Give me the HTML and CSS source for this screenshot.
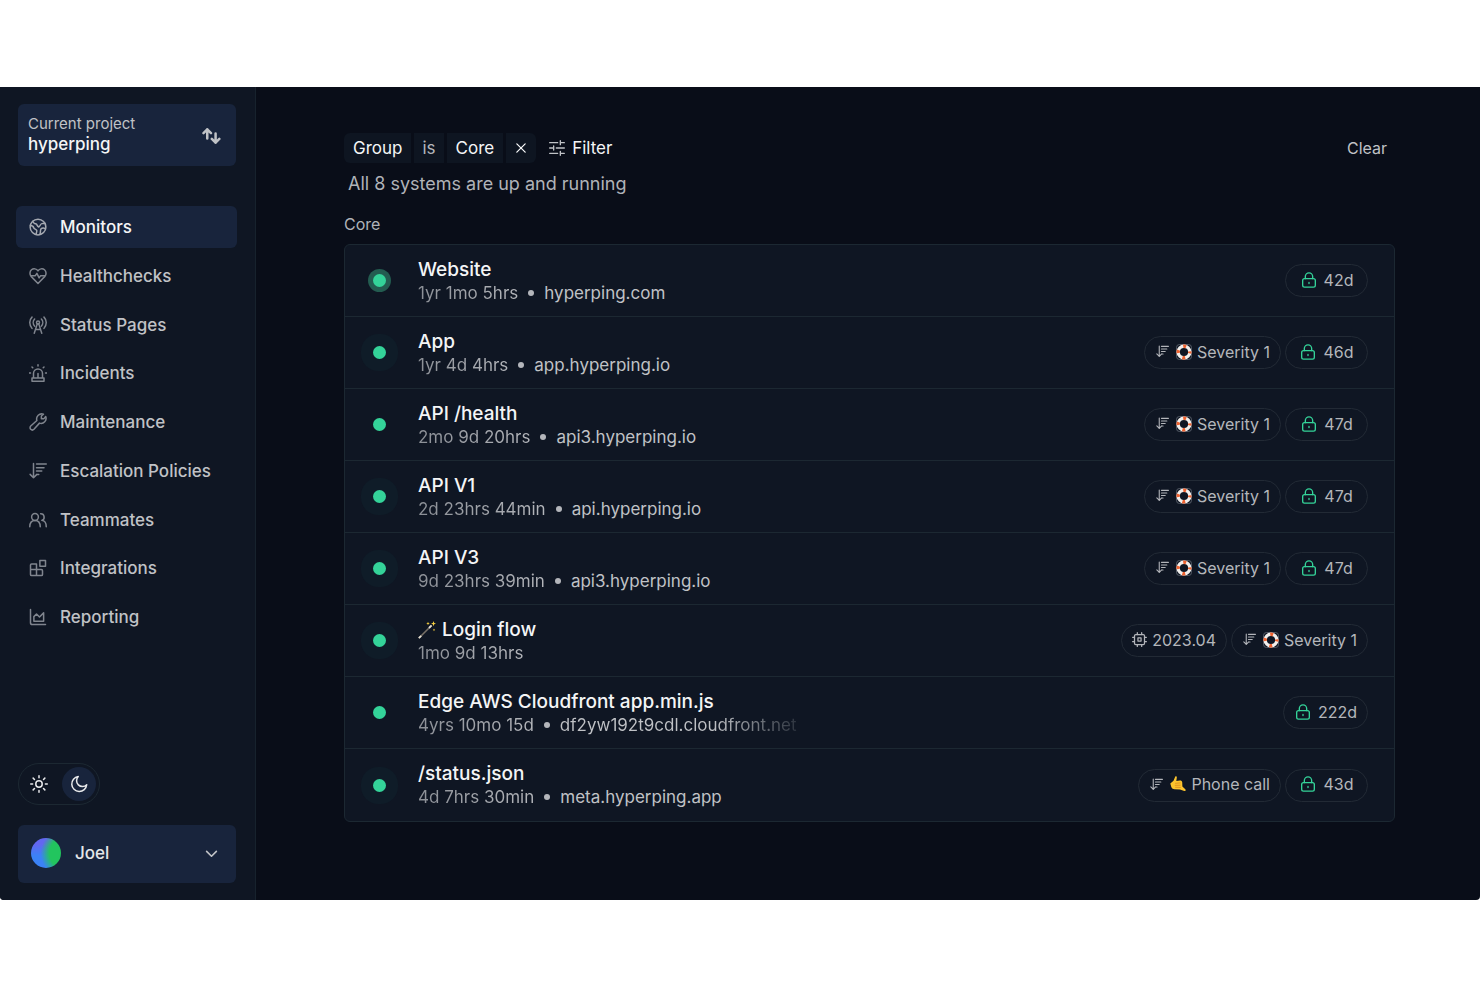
FILE: index.html
```
<!DOCTYPE html>
<html lang="en">
<head>
    <meta charset="UTF-8">
    <meta name="viewport" content="width=device-width, initial-scale=1.0">
    <title>Monitors - hyperping</title>
    <link rel="stylesheet" href="styles.css">
</head>
<body>

<!-- icon sprite -->
<svg class="sprite" aria-hidden="true">
    <symbol id="i-swap" viewBox="0 0 24 24"><path d="M7.500 15V4M3 8.500 7.500 4 12 8.500M17.500 9v11M13 15.500l4.500 4.500 4.500-4.500"/></symbol>
    <symbol id="i-globe" viewBox="0 0 24 24"><circle cx="12" cy="12" r="10.500"/><path d="M5 4.500c1 3 3 3.500 5 3.500 1 2 1 3 3 4 2-1 2-4 4-4.500 1-.5 3 0 4.500-.5M1.800 10c3 0 4 1 4.500 3s3 1.500 4 3.500c.6 1.500-.8 3.500-.8 5.500M22 14.500c-2-1.500-4.500-1.500-6 0-1.500 2 0 4-1.500 7.500"/></symbol>
    <symbol id="i-heart" viewBox="0 0 24 24"><path d="M12 22 2.800 12.500C.6 10 .8 5.800 3.300 3.700 6 1.500 10 2.200 12 5.200c2-3 6-3.700 8.700-1.500 2.500 2.100 2.700 6.300.5 8.800z"/><path d="M3 11.500h5.500l2-3 3 6 2-3H21"/></symbol>
    <symbol id="i-tower" viewBox="0 0 24 24"><circle cx="12" cy="8.500" r="2"/><path d="m7 23 4-12.500h2L17 23M9 18h6M4 1.500c-4 4-4 10.500 0 15M20 1.500c4 4 4 10.500 0 15M7.500 4c-2.500 2.500-2.500 6.500 0 9.500M16.500 4c2.500 2.500 2.500 6.500 0 9.500"/></symbol>
    <symbol id="i-siren" viewBox="0 0 24 24"><path d="M6 18.500v-6a6 6 0 0 1 12 0v6M4 18.500h16V23H4zM12 12.500v6M12 1v1.500M4 4l1 1M20 4l-1 1M.5 12H2M22 12h1.500"/></symbol>
    <symbol id="i-wrench" viewBox="0 0 24 24"><path d="M16.500 7.500V4l2.800-2.300A6.700 6.700 0 0 0 10.500 10L2.300 17.400a3 3 0 0 0 4.300 4.300l7.400-8.200A6.700 6.700 0 0 0 22.300 4.700L20 7.500z"/></symbol>
    <symbol id="i-sort" viewBox="0 0 24 24"><path d="M6 2v19M1.500 16.500 6 21l4.500-4.500M10 2.500h13M10 7.500h10M10 12h7M10 16.500h3"/></symbol>
    <symbol id="i-users" viewBox="0 0 24 24"><circle cx="8" cy="8" r="4.500"/><path d="M1 21c0-5 2.500-8.500 7-8.500s7 3.500 7 8.500M15.500 3.700a4.500 4.500 0 0 1 1.500 8.800c3.500.3 6 3.500 6 8.500"/></symbol>
    <symbol id="i-blocks" viewBox="0 0 24 24"><path d="M14.500 2H22v7.500h-7.500zM3.500 6.500H10V22H3.500A1.500 1.500 0 0 1 2 20.500V8a1.500 1.500 0 0 1 1.500-1.500zM2 14h14.500a1.500 1.500 0 0 1 1.500 1.500v5a1.500 1.500 0 0 1-1.500 1.500H10"/></symbol>
    <symbol id="i-chart" viewBox="0 0 24 24"><path d="M2 2v17.500A2.500 2.500 0 0 0 4.500 22H22M6.500 17.500v-6L10 8l4 4 5.500-5.500v11z"/></symbol>
    <symbol id="i-sun" viewBox="0 0 24 24"><circle cx="12" cy="12" r="4.300"/><path d="M12 1v2.500M12 20.500V23M1 12h2.500M20.500 12H23M4.200 4.200 6 6M18 18l1.800 1.800M4.200 19.800 6 18M18 6l1.800-1.800"/></symbol>
    <symbol id="i-moon" viewBox="0 0 24 24"><path d="M11 2A10 10 0 1 0 22.300 13 7.500 7.500 0 0 1 11 2z"/></symbol>
    <symbol id="i-chevron" viewBox="0 0 24 24"><path d="m3 8 9 9 9-9"/></symbol>
    <symbol id="i-close" viewBox="0 0 24 24"><path d="m2 2 20 20M22 2 2 22"/></symbol>
    <symbol id="i-filter" viewBox="0 0 24 24"><path d="M1 4h12M17 4h6M17 1v6M1 12h6M11 12h12M7 9v6M1 20h12M17 20h6M17 17v6"/></symbol>
    <symbol id="i-lock" viewBox="0 0 24 24"><rect x="2.500" y="10" width="19" height="12.800" rx="2.800"/><path d="M6.500 10V6.700a5.500 5.500 0 0 1 11 0V10M12 15.500v1.800"/></symbol>
    <symbol id="i-chip" viewBox="0 0 24 24"><rect x="4" y="4" width="16" height="16" rx="2"/><path d="M9.500 9.500h5v5h-5zM8.500 1v3M15.500 1v3M8.500 20v3M15.500 20v3M1 8.500h3M1 15.500h3M20 8.500h3M20 15.500h3"/></symbol>
    <symbol id="e-buoy" viewBox="0 0 16 16">
        <rect x=".5" y=".5" width="15" height="15" rx="3" fill="none" stroke="#626a75" stroke-width=".8"/>
        <circle cx="8" cy="8" r="5.800" fill="none" stroke="#f1efed" stroke-width="3.400"/>
        <circle cx="8" cy="8" r="5.800" fill="none" stroke="#ee6230" stroke-width="3.400" stroke-dasharray="3 6.110" stroke-dashoffset="1.500"/>
    </symbol>
    <symbol id="e-hand" viewBox="0 0 16 16">
        <path d="M5.300.5c.9-.5 1.700.2 1.500 1.200L6.300 5l3.500-.4c1.400-.1 2.200.5 2.400 1.600l.2 4.300 2.900 2.700c.9.900.1 2.200-1 1.800l-4.300-1.600-5.500-.2c-1.300-.1-2.600-.9-3.200-2.300L.3 7.400 3.500 4.800z" fill="#fcc42e"/>
        <path d="m5.500 7.300 4.700-.4M5.200 9.300l5-.1M5.600 11.300l4.800.1" fill="none" stroke="#d9861b" stroke-width=".8" stroke-linecap="round"/>
    </symbol>
    <symbol id="e-wand" viewBox="0 0 18 18">
        <path d="M1 17 13 5" stroke="#777067" stroke-width="1.600"/>
        <path d="m.8 17.200 2.400-2.400M11 7l2.600-2.600" stroke="#e5dfd1" stroke-width="1.800"/>
        <path d="m15.500 0 .7 2 1.800.6-1.800.7-.7 2-.7-2-1.800-.7 1.800-.6zM10 .8l.5 1.200 1.200.5-1.200.5L10 4.200 9.500 3l-1.200-.5L9.500 2zM16 7.500l.4 1 .9.400-.9.400-.4 1-.4-1-.9-.4.900-.4z" fill="#f6cf3f"/>
    </symbol>
</svg>

<div class="app">
    <aside class="sidebar">
        <button class="project" type="button">
            <span class="project-text">
                <span class="project-label">Current project</span>
                <span class="project-name">hyperping</span>
            </span>
            <svg class="icon swap"><use href="#i-swap"/></svg>
        </button>

        <nav class="nav">
            <a class="nav-item active" href="#"><svg class="icon"><use href="#i-globe"/></svg>Monitors</a>
            <a class="nav-item" href="#"><svg class="icon"><use href="#i-heart"/></svg>Healthchecks</a>
            <a class="nav-item" href="#"><svg class="icon"><use href="#i-tower"/></svg>Status Pages</a>
            <a class="nav-item" href="#"><svg class="icon"><use href="#i-siren"/></svg>Incidents</a>
            <a class="nav-item" href="#"><svg class="icon"><use href="#i-wrench"/></svg>Maintenance</a>
            <a class="nav-item" href="#"><svg class="icon"><use href="#i-sort"/></svg>Escalation Policies</a>
            <a class="nav-item" href="#"><svg class="icon"><use href="#i-users"/></svg>Teammates</a>
            <a class="nav-item" href="#"><svg class="icon"><use href="#i-blocks"/></svg>Integrations</a>
            <a class="nav-item" href="#"><svg class="icon"><use href="#i-chart"/></svg>Reporting</a>
        </nav>

        <div class="theme">
            <button class="theme-btn" type="button" aria-label="Light theme"><svg class="icon"><use href="#i-sun"/></svg></button>
            <button class="theme-btn on" type="button" aria-label="Dark theme"><svg class="icon"><use href="#i-moon"/></svg></button>
        </div>

        <button class="user" type="button">
            <span class="avatar"></span>
            <span class="user-name">Joel</span>
            <svg class="icon small"><use href="#i-chevron"/></svg>
        </button>
    </aside>

    <main class="content">
        <div class="filters">
            <div class="chips">
                <button class="chip" type="button">Group</button>
                <button class="chip dim" type="button">is</button>
                <button class="chip" type="button">Core</button>
                <button class="chip close" type="button" aria-label="Remove filter"><svg class="icon"><use href="#i-close"/></svg></button>
            </div>
            <button class="filter-btn" type="button"><svg class="icon"><use href="#i-filter"/></svg>Filter</button>
            <button class="clear-btn" type="button">Clear</button>
        </div>
        <p class="summary">All 8 systems are up and running</p>

        <h2 class="group-title">Core</h2>
        <ul class="monitors">
            <li class="monitor">
                <span class="dot ring"></span>
                <div class="info">
                    <div class="name">Website</div>
                    <div class="meta"><span class="time">1yr 1mo 5hrs</span><span class="sep"></span><span class="host">hyperping.com</span></div>
                </div>
                <div class="badges">
                    <span class="badge ssl"><svg class="icon lock"><use href="#i-lock"/></svg>42d</span>
                </div>
            </li>
            <li class="monitor">
                <span class="dot halo"></span>
                <div class="info">
                    <div class="name">App</div>
                    <div class="meta"><span class="time">1yr 4d 4hrs</span><span class="sep"></span><span class="host">app.hyperping.io</span></div>
                </div>
                <div class="badges">
                    <span class="badge"><svg class="icon"><use href="#i-sort"/></svg><svg class="emoji"><use href="#e-buoy"/></svg>Severity 1</span>
                    <span class="badge ssl"><svg class="icon lock"><use href="#i-lock"/></svg>46d</span>
                </div>
            </li>
            <li class="monitor">
                <span class="dot"></span>
                <div class="info">
                    <div class="name">API /health</div>
                    <div class="meta"><span class="time">2mo 9d 20hrs</span><span class="sep"></span><span class="host">api3.hyperping.io</span></div>
                </div>
                <div class="badges">
                    <span class="badge"><svg class="icon"><use href="#i-sort"/></svg><svg class="emoji"><use href="#e-buoy"/></svg>Severity 1</span>
                    <span class="badge ssl"><svg class="icon lock"><use href="#i-lock"/></svg>47d</span>
                </div>
            </li>
            <li class="monitor">
                <span class="dot halo"></span>
                <div class="info">
                    <div class="name">API V1</div>
                    <div class="meta"><span class="time">2d 23hrs 44min</span><span class="sep"></span><span class="host">api.hyperping.io</span></div>
                </div>
                <div class="badges">
                    <span class="badge"><svg class="icon"><use href="#i-sort"/></svg><svg class="emoji"><use href="#e-buoy"/></svg>Severity 1</span>
                    <span class="badge ssl"><svg class="icon lock"><use href="#i-lock"/></svg>47d</span>
                </div>
            </li>
            <li class="monitor">
                <span class="dot halo"></span>
                <div class="info">
                    <div class="name">API V3</div>
                    <div class="meta"><span class="time">9d 23hrs 39min</span><span class="sep"></span><span class="host">api3.hyperping.io</span></div>
                </div>
                <div class="badges">
                    <span class="badge"><svg class="icon"><use href="#i-sort"/></svg><svg class="emoji"><use href="#e-buoy"/></svg>Severity 1</span>
                    <span class="badge ssl"><svg class="icon lock"><use href="#i-lock"/></svg>47d</span>
                </div>
            </li>
            <li class="monitor">
                <span class="dot halo"></span>
                <div class="info">
                    <div class="name"><svg class="emoji wand"><use href="#e-wand"/></svg>Login flow</div>
                    <div class="meta"><span class="time">1mo 9d 13hrs</span></div>
                </div>
                <div class="badges">
                    <span class="badge"><svg class="icon chip-icon"><use href="#i-chip"/></svg>2023.04</span>
                    <span class="badge"><svg class="icon"><use href="#i-sort"/></svg><svg class="emoji"><use href="#e-buoy"/></svg>Severity 1</span>
                </div>
            </li>
            <li class="monitor">
                <span class="dot"></span>
                <div class="info">
                    <div class="name">Edge AWS Cloudfront app.min.js</div>
                    <div class="meta"><span class="time">4yrs 10mo 15d</span><span class="sep"></span><span class="host fade">df2yw192t9cdl.cloudfront.net</span></div>
                </div>
                <div class="badges">
                    <span class="badge ssl"><svg class="icon lock"><use href="#i-lock"/></svg>222d</span>
                </div>
            </li>
            <li class="monitor">
                <span class="dot halo"></span>
                <div class="info">
                    <div class="name">/status.json</div>
                    <div class="meta"><span class="time">4d 7hrs 30min</span><span class="sep"></span><span class="host">meta.hyperping.app</span></div>
                </div>
                <div class="badges">
                    <span class="badge"><svg class="icon"><use href="#i-sort"/></svg><svg class="emoji"><use href="#e-hand"/></svg>Phone call</span>
                    <span class="badge ssl"><svg class="icon lock"><use href="#i-lock"/></svg>43d</span>
                </div>
            </li>
        </ul>
    </main>
</div>

</body>
</html>
```
FILE: styles.css
```
* {
    box-sizing: border-box;
}
body {
    margin: 0;
    padding: 87px 0;
    min-height: 100vh;
    display: flex;
    background-color: #fff;
    font-family: Inter, "Liberation Sans", sans-serif;
    color: #c0c2c6;
}
button {
    font: inherit;
    color: inherit;
    background: none;
    border: 0;
    padding: 0;
    cursor: pointer;
}
a {
    color: inherit;
    text-decoration: none;
}
.sprite {
    position: absolute;
    width: 0;
    height: 0;
}
.icon {
    flex: none;
    width: 18px;
    height: 18px;
    fill: none;
    stroke: currentColor;
    stroke-width: 2;
    stroke-linecap: round;
    stroke-linejoin: round;
}
.emoji {
    flex: none;
    width: 16px;
    height: 16px;
}

.app {
    flex: 1;
    display: flex;
    background-color: #090d18;
    border-radius: 0 0 4px 4px;
    overflow: hidden;
}

/* sidebar */
.sidebar {
    flex: none;
    width: 256px;
    display: flex;
    flex-direction: column;
    padding: 17px 19px 17px 18px;
    background-color: #0f1623;
    border-right: 1px solid #17222d;
}
.project {
    display: flex;
    align-items: center;
    justify-content: space-between;
    height: 62px;
    padding: 0 15px 2px 10px;
    border-radius: 6px;
    background-color: #18243c;
    text-align: left;
}
.project-label,
.project-name {
    display: block;
    line-height: 21px;
}
.project-label {
    font-size: 15px;
}
.project-name {
    font-size: 17px;
    font-weight: 500;
    color: #f4f5f6;
}
.icon.swap {
    width: 20px;
    height: 20px;
    margin-top: 4px;
    stroke-width: 3;
}
.nav {
    display: flex;
    flex-direction: column;
    justify-content: space-between;
    min-height: 432px;
    margin: 40px -1px 0 -2px;
}
.nav-item {
    display: flex;
    align-items: center;
    gap: 13px;
    height: 42px;
    padding: 0 13px;
    border-radius: 6px;
    font-size: 17px;
    font-weight: 500;
}
.nav-item .icon {
    color: #80858e;
}
.nav-item.active {
    background-color: #18243c;
    color: #f4f5f6;
}
.nav-item.active .icon {
    color: #a5a9b1;
}
.theme {
    display: flex;
    align-items: center;
    align-self: flex-start;
    gap: 6px;
    margin-top: auto;
    padding: 3px;
    border: 1px solid #1c2832;
    border-radius: 21px;
}
.theme-btn {
    display: flex;
    align-items: center;
    justify-content: center;
    width: 34px;
    height: 34px;
    border-radius: 50%;
    color: #e8e9eb;
}
.theme-btn.on {
    background-color: #18243c;
}
.user {
    display: flex;
    align-items: center;
    height: 58px;
    margin-top: 20px;
    padding: 0 18px 2px 13px;
    border-radius: 6px;
    background-color: #18243c;
}
.avatar {
    width: 30px;
    height: 30px;
    border-radius: 50%;
    background: radial-gradient(circle at 115% 50%, #22c55e 42%, transparent 66%), linear-gradient(#6366f1 20%, #3b82f6 60%);
}
.user-name {
    flex: 1;
    padding-left: 14px;
    text-align: left;
    font-size: 17px;
    font-weight: 500;
    color: #e4e6e9;
}
.icon.small {
    width: 13px;
    height: 13px;
    stroke-width: 3;
}

/* main column */
.content {
    flex: 1;
    min-width: 0;
    padding: 46px 85px 40px 88px;
}
.filters {
    display: flex;
    align-items: center;
    font-size: 17px;
    color: #f4f5f6;
}
.chips {
    display: flex;
    gap: 3px;
    border-radius: 6px;
    overflow: hidden;
}
.chip {
    display: flex;
    align-items: center;
    height: 30px;
    padding: 0 9px;
    background-color: #0e1521;
}
.chip.dim {
    padding: 0 8px;
    color: #b4b6bb;
}
.chip.close {
    padding: 0 10px;
}
.chip .icon {
    width: 10px;
    height: 10px;
    stroke-width: 3;
}
.filter-btn {
    display: flex;
    align-items: center;
    gap: 7px;
    margin-left: 13px;
}
.filter-btn .icon {
    width: 16px;
    height: 16px;
    color: #c0c2c6;
}
.clear-btn {
    margin-left: auto;
    padding: 0 8px;
    font-size: 16px;
    color: #c0c2c6;
}
.summary {
    margin: 8px 0 0 4px;
    font-size: 18px;
    line-height: 26px;
    color: #b0b3b8;
}
.group-title {
    margin: 17px 0 10px;
    font-size: 16px;
    font-weight: 400;
    line-height: 20px;
    color: #b0b3b8;
}
.monitors {
    margin: 0;
    padding: 0;
    list-style: none;
    background-color: #0f1623;
    border: 1px solid #1c2832;
    border-radius: 6px;
}
.monitor {
    display: flex;
    align-items: center;
    height: 72px;
    padding: 0 26px 0 28px;
    border-bottom: 1px solid #1c2832;
}
.monitor:last-child {
    border-bottom: 0;
}
.dot {
    flex: none;
    width: 13px;
    height: 13px;
    border-radius: 50%;
    background-color: #34d399;
}
.dot.ring {
    box-shadow: 0 0 0 5px #235c50;
}
.dot.halo {
    box-shadow: 0 0 0 12px #0f1c28;
}
.info {
    flex: 1;
    min-width: 0;
    padding-left: 32px;
}
.name {
    display: flex;
    align-items: center;
    font-size: 19px;
    font-weight: 500;
    line-height: 24px;
    color: #f4f5f6;
}
.wand {
    width: 18px;
    height: 18px;
    margin-right: 6px;
}
.meta {
    display: flex;
    align-items: center;
    font-size: 17px;
    line-height: 22px;
}
.time {
    color: transparent;
    background: linear-gradient(90deg, #8b8f96, #b4b6bb);
    background-clip: text;
    -webkit-background-clip: text;
}
.sep {
    width: 6px;
    height: 6px;
    margin: 0 10px;
    border-radius: 50%;
    background-color: #b4b6bb;
}
.host.fade {
    color: transparent;
    background: linear-gradient(90deg, #c0c2c6 65%, #2c333e);
    background-clip: text;
    -webkit-background-clip: text;
}
.badges {
    display: flex;
    gap: 4px;
}
.badge {
    display: flex;
    align-items: center;
    justify-content: center;
    gap: 5px;
    height: 33px;
    padding: 0 10px 2px;
    border: 1px solid #222a35;
    border-radius: 17px;
    font-size: 16px;
    color: #b4b6bb;
}
.badge .icon {
    width: 13px;
    height: 13px;
    margin: 0 2px 0 1px;
}
.badge.ssl {
    min-width: 83px;
}
.badge .icon.lock {
    width: 16px;
    height: 16px;
    color: #34d399;
}
.badge .icon.chip-icon {
    width: 15px;
    height: 15px;
    margin: 0;
}
```
